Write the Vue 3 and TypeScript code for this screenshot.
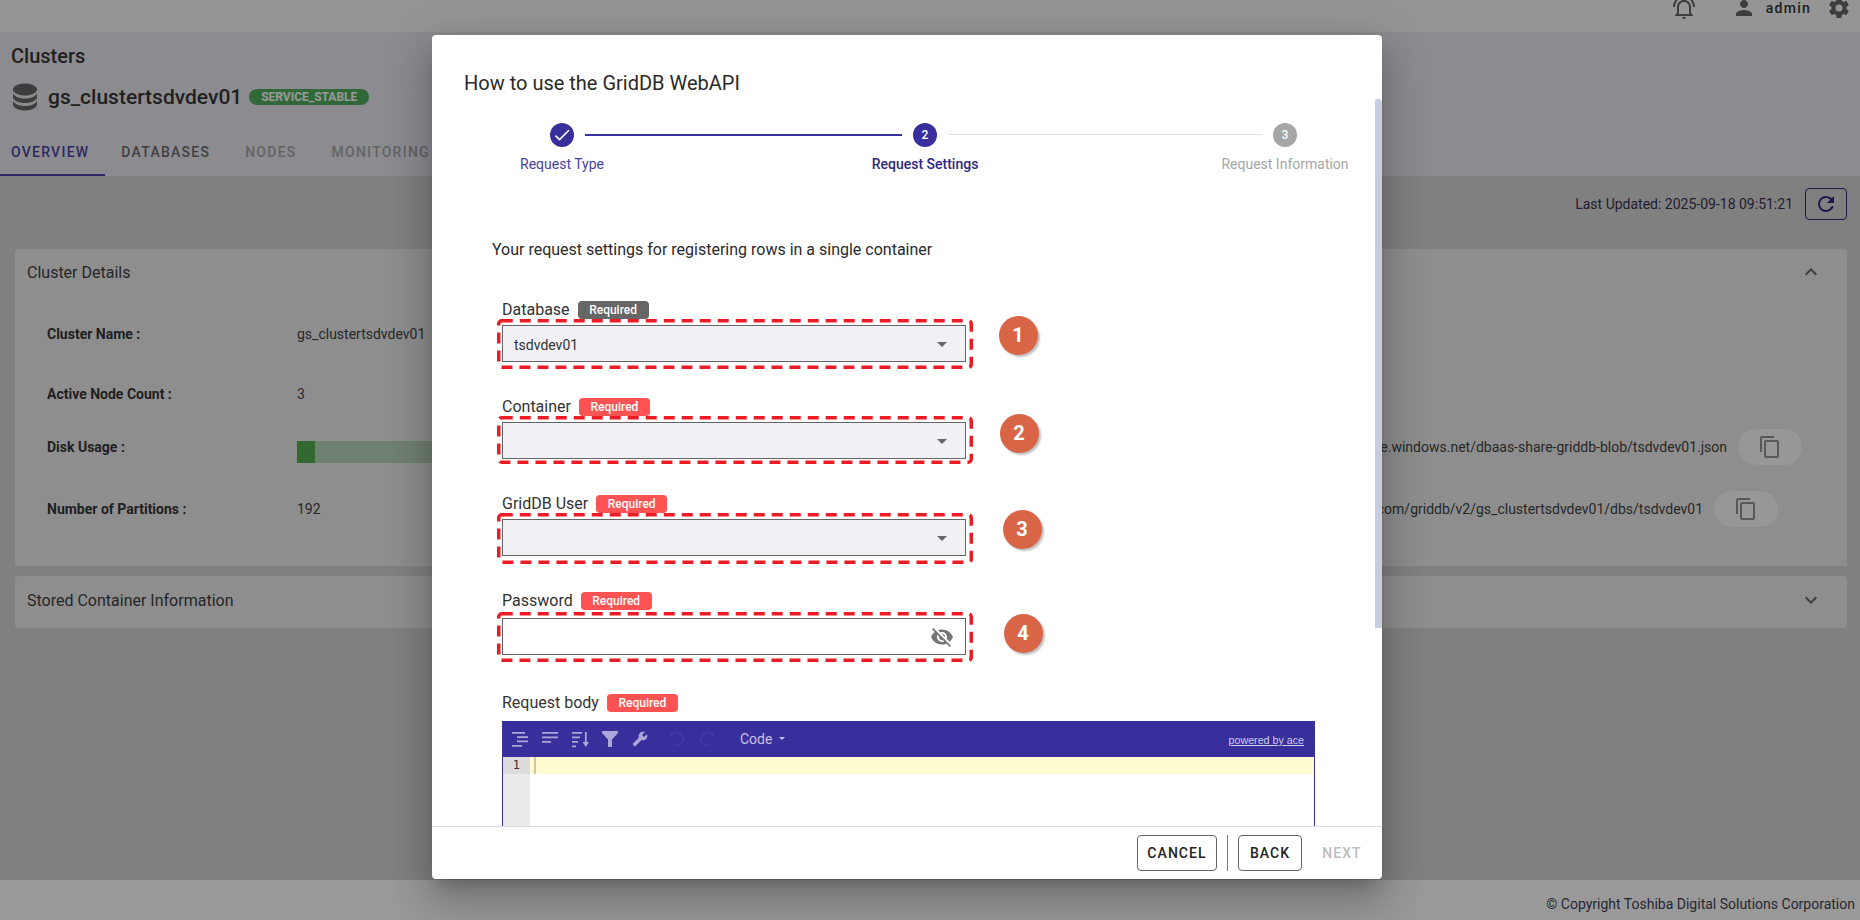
<script setup lang="ts">
interface Field {
  label: string;
  value?: string;
  filled?: boolean;
  password?: boolean;
  markHeight: number;
  pinX: number;
  pinY: number;
  headGap: number;
  fieldHeight: number;
}

interface DetailRow {
  label: string;
  value?: string;
  progress?: number;
  url?: string;
  urlOffset?: number;
  height: number;
}

const tabs = ['OVERVIEW', 'DATABASES', 'NODES', 'MONITORING'];

const detailRows: DetailRow[] = [
  { label: 'Cluster Name :', value: 'gs_clustertsdvdev01', height: 60 },
  { label: 'Active Node Count :', value: '3', height: 60 },
  {
    label: 'Disk Usage :',
    progress: 18,
    url: 'https://griddbshare.blob.core.windows.net/dbaas-share-griddb-blob/tsdvdev01.json',
    urlOffset: 45,
    height: 46,
  },
  {
    label: 'Number of Partitions :',
    value: '192',
    url: 'https://cloud.griddb.com/griddb/v2/gs_clustertsdvdev01/dbs/tsdvdev01',
    urlOffset: 69,
    height: 78,
  },
];

const fields: Field[] = [
  { label: 'Database', value: 'tsdvdev01', filled: true, markHeight: 50, pinX: 1018, pinY: 335, headGap: 0, fieldHeight: 97 },
  { label: 'Container', markHeight: 48, pinX: 1019, pinY: 433, headGap: 0, fieldHeight: 97 },
  { label: 'GridDB User', markHeight: 51, pinX: 1022, pinY: 529, headGap: 0, fieldHeight: 97 },
  { label: 'Password', password: true, markHeight: 50, pinX: 1023, pinY: 634, headGap: 2, fieldHeight: 102 },
];

// pins are placed against the left edge of a field, which sits at x=497
function pinStyle(field: Field, index: number) {
  const tops = [318, 415, 512, 612];
  return {
    left: `${field.pinX - 497 - 19.5}px`,
    top: `${field.pinY - tops[index] - 20}px`,
  };
}
</script>

<template>
  <div class="page">
    <header class="topbar">
      <svg class="top-icon bell" viewBox="0 0 24 24"><path d="M10,21H14A2,2 0 0,1 12,23A2,2 0 0,1 10,21M21,19V20H3V19L5,17V11C5,7.9 7.03,5.17 10,4.29C10,4.19 10,4.1 10,4A2,2 0 0,1 12,2A2,2 0 0,1 14,4C14,4.1 14,4.19 14,4.29C16.97,5.17 19,7.9 19,11V17L21,19M17,11A5,5 0 0,0 12,6A5,5 0 0,0 7,11V18H17V11M19.75,3.19L18.33,4.61C20.04,6.3 21,8.6 21,11H23C23,8.07 21.84,5.25 19.75,3.19M1,11H3C3,8.6 3.96,6.3 5.67,4.61L4.25,3.19C2.16,5.25 1,8.07 1,11Z" /></svg>
      <svg class="top-icon person" viewBox="0 0 24 24"><path d="M12 12c2.21 0 4-1.79 4-4s-1.79-4-4-4-4 1.79-4 4 1.79 4 4 4zm0 2c-2.67 0-8 1.34-8 4v2h16v-2c0-2.66-5.33-4-8-4z" /></svg>
      <span class="user-name">admin</span>
      <svg class="top-icon gear" viewBox="0 0 24 24"><path d="M12,15.5A3.5,3.5 0 0,1 8.5,12A3.5,3.5 0 0,1 12,8.5A3.5,3.5 0 0,1 15.5,12A3.5,3.5 0 0,1 12,15.5M19.43,12.97C19.47,12.65 19.5,12.33 19.5,12C19.5,11.67 19.47,11.34 19.43,11L21.54,9.37C21.73,9.22 21.78,8.95 21.66,8.73L19.66,5.27C19.54,5.05 19.27,4.96 19.05,5.05L16.56,6.05C16.04,5.66 15.5,5.32 14.87,5.07L14.5,2.42C14.46,2.18 14.25,2 14,2H10C9.75,2 9.54,2.18 9.5,2.42L9.13,5.07C8.5,5.32 7.96,5.66 7.44,6.05L4.95,5.05C4.73,4.96 4.46,5.05 4.34,5.27L2.34,8.73C2.21,8.95 2.27,9.22 2.46,9.37L4.57,11C4.53,11.34 4.5,11.67 4.5,12C4.5,12.33 4.53,12.65 4.57,12.97L2.46,14.63C2.27,14.78 2.21,15.05 2.34,15.27L4.34,18.73C4.46,18.95 4.73,19.03 4.95,18.95L7.44,17.94C7.96,18.34 8.5,18.68 9.13,18.93L9.5,21.58C9.54,21.82 9.75,22 10,22H14C14.25,22 14.46,21.82 14.5,21.58L14.87,18.93C15.5,18.67 16.04,18.34 16.56,17.94L19.05,18.95C19.27,19.03 19.54,18.95 19.66,18.73L21.66,15.27C21.78,15.05 21.73,14.78 21.54,14.63L19.43,12.97Z" /></svg>
    </header>

    <section class="cluster-head">
      <h1 class="page-title">Clusters</h1>
      <div class="cluster-name">
        <svg class="db-icon" viewBox="0 0 24 24"><path d="M12,3C7.58,3 4,4.79 4,7C4,9.21 7.58,11 12,11C16.42,11 20,9.21 20,7C20,4.79 16.42,3 12,3M4,9V12C4,14.21 7.58,16 12,16C16.42,16 20,14.21 20,12V9C20,11.21 16.42,13 12,13C7.58,13 4,11.21 4,9M4,14V17C4,19.21 7.58,21 12,21C16.42,21 20,19.21 20,17V14C20,16.21 16.42,18 12,18C7.58,18 4,16.21 4,14Z" /></svg>
        <span class="cluster-text">gs_clustertsdvdev01</span>
        <span class="status-chip">SERVICE_STABLE</span>
      </div>
      <nav class="tabs">
        <span
          v-for="(tab, i) in tabs"
          :key="tab"
          class="tab"
          :class="{ 'tab--active': i === 0, 'tab--normal': i === 1 }"
        >{{ tab }}</span>
      </nav>
    </section>

    <main class="content">
      <div class="updated-row">
        <span class="updated-text">Last Updated: 2025-09-18 09:51:21</span>
        <button class="refresh-btn">
          <svg viewBox="0 0 24 24"><path d="M17.65,6.35C16.2,4.9 14.21,4 12,4A8,8 0 0,0 4,12A8,8 0 0,0 12,20C15.73,20 18.84,17.45 19.73,14H17.65C16.83,16.33 14.61,18 12,18A6,6 0 0,1 6,12A6,6 0 0,1 12,6C13.66,6 15.14,6.69 16.22,7.78L13,11H20V4L17.65,6.35Z" /></svg>
        </button>
      </div>

      <section class="panel panel--details">
        <div class="panel-head">
          <span>Cluster Details</span>
          <svg class="chevron" viewBox="0 0 24 24"><path d="M7.41,15.41L12,10.83L16.59,15.41L18,14L12,8L6,14L7.41,15.41Z" /></svg>
        </div>
        <div class="details">
          <div
            v-for="row in detailRows"
            :key="row.label"
            class="detail-row"
            :style="{ height: row.height + 'px' }"
          >
            <span class="detail-label">{{ row.label }}</span>
            <span v-if="row.value" class="detail-value">{{ row.value }}</span>
            <div v-if="row.progress" class="bar">
              <div class="bar-fill" :style="{ width: row.progress + 'px' }"></div>
            </div>
            <div v-if="row.url" class="url-cell" :style="{ marginRight: row.urlOffset + 'px' }">
              <span class="detail-value">{{ row.url }}</span>
              <button class="copy-btn">
                <svg viewBox="0 0 24 24"><path d="M19,21H8V7H19M19,5H8A2,2 0 0,0 6,7V21A2,2 0 0,0 8,23H19A2,2 0 0,0 21,21V7A2,2 0 0,0 19,5M16,1H4A2,2 0 0,0 2,3V17H4V3H16V1Z" /></svg>
              </button>
            </div>
          </div>
        </div>
      </section>

      <section class="panel panel--stored">
        <div class="panel-head">
          <span>Stored Container Information</span>
          <svg class="chevron" viewBox="0 0 24 24"><path d="M7.41,8.58L12,13.17L16.59,8.58L18,10L12,16L6,10L7.41,8.58Z" /></svg>
        </div>
      </section>
    </main>

    <footer class="page-footer">© Copyright Toshiba Digital Solutions Corporation</footer>

    <div class="overlay"></div>

    <div class="dialog">
      <div class="dialog-body">
        <h2 class="dialog-title">How to use the GridDB WebAPI</h2>

        <div class="stepper">
          <div class="step step--done">
            <span class="step-dot">
              <svg viewBox="0 0 24 24"><path d="M21,7L9,19L3.5,13.5L4.91,12.09L9,16.17L19.59,5.59L21,7Z" /></svg>
            </span>
            <span class="step-label">Request Type</span>
          </div>
          <div class="step-line step-line--done"></div>
          <div class="step step--current">
            <span class="step-dot">2</span>
            <span class="step-label">Request Settings</span>
          </div>
          <div class="step-line"></div>
          <div class="step step--todo">
            <span class="step-dot">3</span>
            <span class="step-label">Request Information</span>
          </div>
        </div>

        <p class="intro">Your request settings for registering rows in a single container</p>

        <div class="form">
          <div
            v-for="(field, i) in fields"
            :key="field.label"
            class="field"
            :style="{ height: field.fieldHeight + 'px' }"
          >
            <div class="field-head" :style="{ marginBottom: field.headGap + 'px' }">
              <label class="field-label">{{ field.label }}</label>
              <span class="required" :class="{ 'required--ok': field.filled }">Required</span>
            </div>
            <div class="mark" :style="{ height: field.markHeight + 'px' }">
              <svg class="mark-frame" width="476" :height="field.markHeight">
                <rect x="1.75" y="1.75" width="472.5" :height="field.markHeight - 3.5" rx="3" />
              </svg>
              <div class="input" :class="{ 'input--plain': field.password }">
                <span class="input-value">{{ field.value }}</span>
                <svg v-if="field.password" class="eye" viewBox="0 0 24 24"><path d="M11.83,9L15,12.16C15,12.11 15,12.05 15,12A3,3 0 0,0 12,9C11.94,9 11.89,9 11.83,9M7.53,9.8L9.08,11.35C9.03,11.56 9,11.77 9,12A3,3 0 0,0 12,15C12.22,15 12.44,14.97 12.65,14.92L14.2,16.47C13.53,16.8 12.79,17 12,17A5,5 0 0,1 7,12C7,11.21 7.2,10.47 7.53,9.8M2,4.27L4.28,6.55L4.73,7C3.08,8.3 1.78,10 1,12C2.73,16.39 7,19.5 12,19.5C13.55,19.5 15.03,19.2 16.38,18.66L16.81,19.08L19.73,22L21,20.73L3.27,3M12,7A5,5 0 0,1 17,12C17,12.64 16.87,13.26 16.64,13.82L19.57,16.75C21.07,15.5 22.27,13.86 23,12C21.27,7.61 17,4.5 12,4.5C10.6,4.5 9.26,4.75 8,5.2L10.17,7.35C10.74,7.13 11.35,7 12,7Z" /></svg>
                <svg v-else class="caret" viewBox="0 0 24 24"><path d="M7,10L12,15L17,10H7Z" /></svg>
              </div>
              <span class="pin" :style="pinStyle(field, i)">{{ i + 1 }}</span>
            </div>
          </div>

          <div class="field-head">
            <label class="field-label">Request body</label>
            <span class="required">Required</span>
          </div>
          <div class="editor">
            <div class="editor-bar">
              <svg class="tool" viewBox="0 0 16 16"><path d="M0 0h13v1.8H0zM5 4.2h11v1.8H5zM5 8.4h11v1.8H5zM0 13h10v1.8H0z" /></svg>
              <svg class="tool" viewBox="0 0 16 16"><path d="M0 0h16v1.8H0zM0 4.5h16v1.8H0zM0 9h9v1.8H0z" /></svg>
              <svg class="tool" viewBox="0 0 17 16"><path d="M0 0h10v1.8H0zM0 4.5h8v1.8H0zM0 9h6v1.8H0zM0 13.5h4v1.8H0zM12.9 0h1.8v10H17l-3.2 5-3.2-5h2.3z" /></svg>
              <svg class="tool" viewBox="0 0 16 16"><path d="M0 0h16v2L10 8.5V16H6V8.5L0 2z" /></svg>
              <svg class="tool" viewBox="0 0 24 24"><path d="M22.7 19l-9.1-9.1c.9-2.3.4-5-1.5-6.9-2-2-5-2.4-7.4-1.3L9 6 6 9 1.6 4.7C.4 7.1.9 10.1 2.9 12.1c1.9 1.9 4.6 2.4 6.9 1.5l9.1 9.1c.4.4 1 .4 1.4 0l2.3-2.3c.5-.4.5-1.1.1-1.4z" transform="matrix(-1 0 0 1 24 0)" /></svg>
              <svg class="tool-dim tool-dim--undo" viewBox="0 0 17 16"><path d="M4 3.5a6.5 6.5 0 1 1 2 10.8" /><path class="tool-head" d="M0 2l6 0-2 5z" /></svg>
              <svg class="tool-dim tool-dim--redo" viewBox="0 0 17 16"><path d="M13 3.5a6.5 6.5 0 1 0-2 10.8" /><path class="tool-head" d="M17 2l-6 0 2 5z" /></svg>
              <span class="mode">Code</span>
              <span class="mode-caret"></span>
              <a class="powered">powered by ace</a>
            </div>
            <div class="editor-body">
              <div class="gutter"><span class="gutter-line">1</span></div>
              <div class="code">
                <div class="active-line"><span class="cursor"></span></div>
              </div>
            </div>
          </div>
        </div>
      </div>

      <div class="dialog-actions">
        <button class="action action--outlined">CANCEL</button>
        <span class="action-divider"></span>
        <button class="action action--outlined action--back">BACK</button>
        <button class="action action--disabled">NEXT</button>
      </div>

      <div class="scroll-thumb"></div>
    </div>
  </div>
</template>

<style scoped>
.page {
  position: relative;
  width: 1860px;
  height: 920px;
  overflow: hidden;
  display: flex;
  flex-direction: column;
  font-family: Roboto, "Liberation Sans", sans-serif;
  color: #212121;
  background: #d1d1d1;
}
.topbar {
  height: 32px;
  flex: none;
  background: #f8f8f8;
  display: flex;
  justify-content: flex-end;
  overflow: hidden;
  position: relative;
}
.top-icon {
  fill: #555;
  width: 24px;
  height: 24px;
  margin-top: -4px;
}
.bell { margin-right: 36px; }
.person { margin-right: 10px; }
.user-name {
  font-size: 14px;
  font-weight: 500;
  letter-spacing: 1.25px;
  line-height: 16px;
  margin-right: 16px;
}
.gear { margin-right: 9px; }

.cluster-head {
  height: 144px;
  flex: none;
  background: #e8e8ee;
  display: flex;
  flex-direction: column;
}
.page-title {
  margin: 12px 0 0 11px;
  font-size: 20px;
  font-weight: 500;
  line-height: 24px;
}
.cluster-name {
  display: flex;
  align-items: center;
  margin-top: 11px;
  height: 36px;
  margin-left: 7px;
}
.db-icon {
  width: 36px;
  height: 36px;
  fill: #555;
}
.cluster-text {
  margin-left: 5px;
  font-size: 21px;
  font-weight: 500;
}
.status-chip {
  margin-left: 7px;
  width: 120px;
  height: 16px;
  line-height: 16px;
  border-radius: 8px;
  background: #3ea44c;
  color: #fff;
  font-size: 12px;
  font-weight: 700;
  text-align: center;
}
.tabs {
  display: flex;
  margin-top: auto;
  height: 48px;
}
.tab {
  padding: 0 19px 0 16px;
  height: 48px;
  line-height: 49px;
  font-size: 14px;
  font-weight: 500;
  letter-spacing: 1.25px;
  color: #9c9ca0;
  box-sizing: border-box;
}
.tab--normal { color: #5a5a5e; }
.tab--active {
  padding: 0 16px 0 11px;
  color: #382e9c;
  border-bottom: 2px solid #382e9c;
}

.content {
  flex: 1;
  padding: 12px 13px 0 15px;
  display: flex;
  flex-direction: column;
}
.updated-row {
  display: flex;
  justify-content: flex-end;
  align-items: center;
  height: 32px;
}
.updated-text {
  font-size: 14px;
  color: #1d1a3c;
}
.refresh-btn {
  margin-left: 12px;
  width: 42px;
  height: 32px;
  padding: 0;
  border: 1px solid #1a1470;
  border-radius: 4px;
  background: transparent;
  display: flex;
  align-items: center;
  justify-content: center;
}
.refresh-btn svg {
  width: 24px;
  height: 24px;
  fill: #1a1470;
}
.panel {
  background: #ebebed;
  border-radius: 4px;
}
.panel--details {
  margin-top: 29px;
  height: 317px;
  border-radius: 4px 4px 0 0;
}
.panel--stored {
  margin-top: 10px;
  height: 52px;
}
.panel-head {
  height: 46px;
  padding: 0 24px 0 12px;
  display: flex;
  align-items: center;
  justify-content: space-between;
  font-size: 16px;
  color: #2a2a2a;
}
.panel--stored .panel-head { height: 48px; }
.chevron {
  width: 24px;
  height: 24px;
  fill: #555;
}
.details {
  padding: 9px 0 0 32px;
}
.detail-row {
  display: flex;
  align-items: center;
  font-size: 14px;
}
.detail-label {
  width: 250px;
  font-weight: 700;
  flex: none;
}
.detail-value {
  white-space: nowrap;
  color: #2b2b2b;
}
.bar {
  width: 500px;
  height: 22px;
  margin-top: 10px;
  background: #b6d3b5;
}
.bar-fill {
  height: 100%;
  background: #43a53d;
}
.url-cell {
  margin-left: auto;
  display: flex;
  align-items: center;
}
.copy-btn {
  margin-left: 11px;
  width: 64px;
  height: 36px;
  border: none;
  border-radius: 18px;
  padding: 0;
  background: #fbfbfb;
  display: flex;
  align-items: center;
  justify-content: center;
}
.copy-btn svg {
  width: 24px;
  height: 24px;
  fill: #888;
}

.page-footer {
  height: 40px;
  flex: none;
  background: #fff;
  padding-right: 5px;
  text-align: right;
  font-size: 14px;
  line-height: 49px;
  color: #2c2c3e;
}

.overlay {
  position: absolute;
  inset: 0;
  background: rgba(33, 33, 33, 0.46);
}

.dialog {
  position: absolute;
  left: 432px;
  top: 35px;
  width: 950px;
  height: 844px;
  background: #fff;
  border-radius: 4px;
  display: flex;
  flex-direction: column;
  overflow: hidden;
  box-shadow: 0 11px 15px -7px rgba(0, 0, 0, 0.2), 0 24px 38px 3px rgba(0, 0, 0, 0.14), 0 9px 46px 8px rgba(0, 0, 0, 0.12);
}
.dialog-body {
  flex: 1;
  min-height: 0;
  overflow: hidden;
}
.dialog-title {
  margin: 32px 0 0 32px;
  font-size: 20px;
  font-weight: 400;
  line-height: 32px;
  color: #2a2a2a;
}
.stepper {
  margin: 24px 0 0 118px;
  display: flex;
  align-items: flex-start;
}
.step {
  width: 24px;
  display: flex;
  flex-direction: column;
  align-items: center;
}
.step-dot {
  width: 24px;
  height: 24px;
  flex: none;
  border-radius: 50%;
  background: #382e9c;
  color: #fff;
  font-size: 12px;
  font-weight: 500;
  line-height: 24px;
  text-align: center;
  display: flex;
  align-items: center;
  justify-content: center;
}
.step-dot svg {
  width: 20px;
  height: 20px;
  fill: #fff;
}
.step-label {
  margin-top: 7px;
  font-size: 14px;
  line-height: 20px;
  white-space: nowrap;
}
.step--done .step-label { color: #4a41a8; }
.step--current .step-label { color: #2d2a80; font-weight: 500; }
.step--todo .step-dot { background: #a6a6a6; }
.step--todo .step-label { color: #a6a6a6; }
.step-line {
  width: 314px;
  height: 1px;
  margin: 11px 11px 0;
  background: #e0e0e0;
}
.step-line--done {
  width: 317px;
  height: 2px;
  background: #382e9c;
}
.intro {
  margin: 64px 0 0 60px;
  font-size: 16px;
  line-height: 24px;
  color: #2a2a2a;
}
.form {
  margin: 39px 0 0 70px;
}
.field-head {
  display: flex;
  align-items: center;
  height: 18px;
  gap: 8px;
}
.field-label {
  font-size: 16px;
  color: #333;
  margin-bottom: 2px;
}
.required {
  width: 71px;
  height: 18px;
  line-height: 18px;
  border-radius: 4px;
  background: #ff5252;
  color: #fff;
  font-size: 12px;
  font-weight: 500;
  text-align: center;
}
.required--ok { background: #666; }
.mark {
  position: relative;
  width: 476px;
  margin-left: -5px;
  box-sizing: border-box;
  padding: 6px 0 0 5px;
}
.mark-frame {
  position: absolute;
  left: 0;
  top: 0;
}
.mark-frame rect {
  fill: none;
  stroke: #ed1c24;
  stroke-width: 3.5;
  stroke-dasharray: 11 7;
}
.input {
  position: relative;
  width: 464px;
  height: 37px;
  box-sizing: border-box;
  border: 1px solid #666;
  background: #f0f0f5;
  display: flex;
  align-items: center;
  justify-content: space-between;
  padding: 0 17px 0 11px;
}
.input--plain { background: #fff; padding-right: 11px; }
.input-value {
  font-size: 14px;
  color: #333;
  padding-top: 2px;
}
.caret {
  width: 24px;
  height: 24px;
  margin-right: -6px;
  fill: #666;
}
.eye {
  width: 24px;
  height: 24px;
  fill: #757575;
}
.pin {
  position: absolute;
  width: 39px;
  height: 39px;
  border-radius: 50%;
  background: #d96547;
  color: #fff;
  font-size: 20px;
  font-weight: 700;
  line-height: 39px;
  text-align: center;
  box-shadow: 2px 2px 2px rgba(0, 0, 0, 0.25);
}
.editor {
  margin-top: 9px;
  width: 813px;
  height: 400px;
  box-sizing: border-box;
  border: 1px solid #382e9c;
  border-top: none;
}
.editor-bar {
  height: 36px;
  margin: 0 -1px;
  background: #382e9c;
  display: flex;
  align-items: center;
  position: relative;
}
.tool {
  position: absolute;
  top: 11px;
  width: 16px;
  height: 16px;
  fill: #aba7d9;
}
.tool:nth-child(1) { left: 10px; }
.tool:nth-child(2) { left: 40px; }
.tool:nth-child(3) { left: 70px; width: 17px; }
.tool:nth-child(4) { left: 100px; top: 10px; }
.tool:nth-child(5) { left: 130px; top: 10px; }
.tool-dim {
  position: absolute;
  top: 10px;
  width: 17px;
  height: 16px;
  fill: none;
  stroke: #4339a2;
  stroke-width: 2;
}
.tool-head { fill: #4339a2; stroke: none; }
.tool-dim--undo { left: 166px; }
.tool-dim--redo { left: 197px; }
.mode {
  position: absolute;
  left: 238px;
  top: 9px;
  font-size: 14px;
  line-height: 18px;
  color: #c6c3e6;
}
.mode-caret {
  position: absolute;
  left: 277px;
  top: 16px;
  border: 3px solid transparent;
  border-top: 3px solid #c6c3e6;
  border-bottom: none;
  border-left-width: 3px;
}
.powered {
  position: absolute;
  right: 11px;
  top: 13px;
  font-family: "Liberation Sans", Arial, sans-serif;
  font-size: 10.7px;
  line-height: 13px;
  color: #d0cdee;
  text-decoration: underline;
}
.editor-body {
  display: flex;
  height: 100%;
}
.gutter {
  width: 27px;
  background: #ebebeb;
  flex: none;
}
.gutter-line {
  display: block;
  height: 17px;
  line-height: 17px;
  background: #dcdcdc;
  padding-right: 10px;
  text-align: right;
  font-family: "DejaVu Sans Mono", "Liberation Mono", monospace;
  font-size: 12px;
  color: #333;
}
.code { flex: 1; }
.active-line {
  height: 17px;
  background: #fffbd1;
}
.cursor {
  display: block;
  margin-left: 4px;
  width: 2px;
  height: 17px;
  background: #cfc8a0;
}
.dialog-actions {
  height: 53px;
  flex: none;
  box-sizing: border-box;
  border-top: 1px solid #ddd;
  padding: 8px 20px 0 0;
  display: flex;
  justify-content: flex-end;
  align-items: flex-start;
}
.action {
  height: 36px;
  padding: 0;
  border: none;
  background: transparent;
  font-family: Roboto, "Liberation Sans", sans-serif;
  font-size: 14px;
  font-weight: 500;
  letter-spacing: 1.05px;
  color: #222;
}
.action--outlined {
  width: 80px;
  border: 1px solid #666;
  border-radius: 4px;
}
.action--back { width: 64px; }
.action-divider {
  width: 1px;
  height: 36px;
  margin: 0 10px;
  background: #777;
}
.action--disabled {
  width: 40px;
  margin-left: 20px;
  color: #bdbdbd;
}
.scroll-thumb {
  position: absolute;
  left: 943px;
  top: 64px;
  width: 7px;
  height: 529px;
  background: #c8ccdb;
  border-radius: 3px 3px 0 0;
}
</style>

<style>
html,
body {
  margin: 0;
  overflow: hidden;
}
</style>
